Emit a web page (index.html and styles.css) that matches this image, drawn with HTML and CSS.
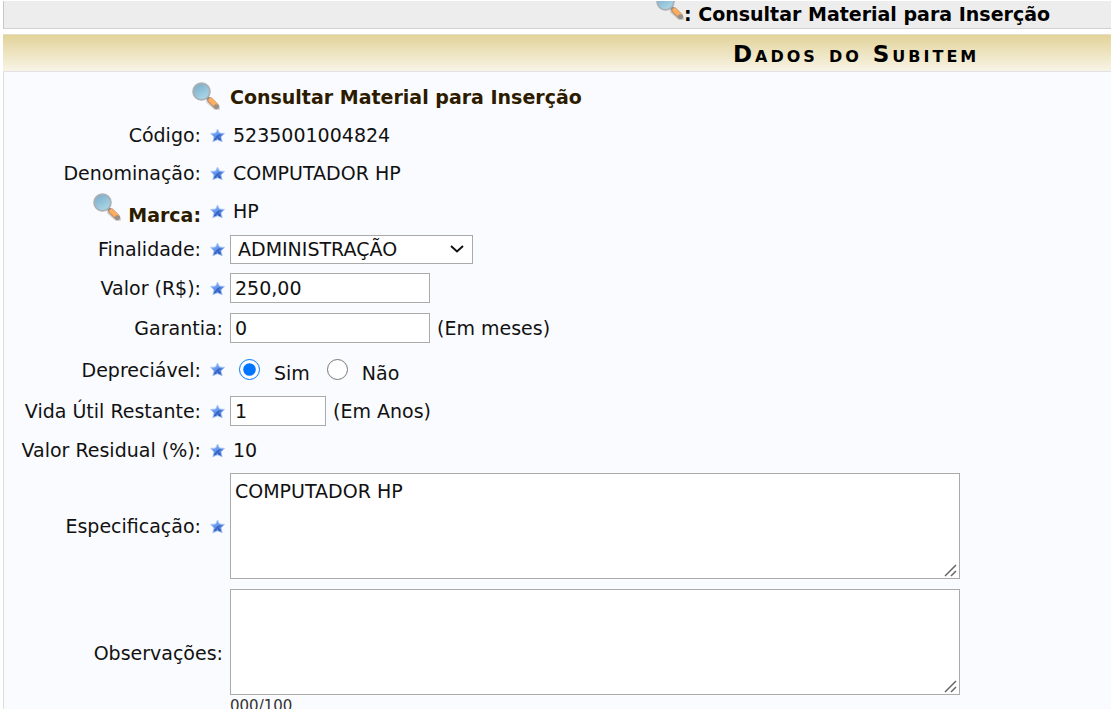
FILE: index.html
```
<!DOCTYPE html>
<html lang="pt-BR">
<head>
<meta charset="utf-8">
<title>Dados do Subitem</title>
<link rel="stylesheet" href="styles.css">
</head>
<body>
<svg class="defs" aria-hidden="true">
  <defs>
    <linearGradient id="glass" x1="0" y1="0" x2="0.6" y2="1"><stop offset="0" stop-color="#75a8c4"/><stop offset="1" stop-color="#aad7e9"/></linearGradient>
    <linearGradient id="blue" x1="0" y1="0" x2="0.5" y2="1"><stop offset="0" stop-color="#a6ccff"/><stop offset="0.45" stop-color="#6b9cf0"/><stop offset="1" stop-color="#3a6acb"/></linearGradient>
    <symbol id="lens" viewBox="0 0 28 28">
      <path d="M17 19l8 7" stroke="#777" stroke-opacity=".3" stroke-width="6" stroke-linecap="round"/>
      <path d="M14 14l4 4" stroke="#77787c" stroke-width="3.500"/>
      <path d="M18.500 18.500l5.500 5.500" stroke="#c09070" stroke-width="6" stroke-linecap="round"/>
      <path d="M18.500 18l5 5" stroke="#ffae60" stroke-width="4" stroke-linecap="round"/>
      <path d="M24 24.500l.8.300" stroke="#96918c" stroke-width="4.500" stroke-linecap="round"/>
      <circle cx="9.500" cy="9.500" r="8.400" fill="url(#glass)" stroke="#a9b1b6" stroke-width="1.800"/>
    </symbol>
    <symbol id="star" viewBox="0 0 15 15">
      <path d="M7.500 1l2 4 5 .4-3.500 3.600 1.200 4.800-4.700-2-4.700 2L4 9 .6 5.400l5-.4z" fill="url(#blue)" stroke="#a9c6f6" stroke-width=".8" stroke-linejoin="round"/>
      <path d="M7.500 8l3-1.500M7.500 8l2.500 4M7.500 8l-3 4" stroke="#2448aa" stroke-opacity=".7" stroke-width="1.200"/>
    </symbol>
  </defs>
</svg>
<header class="legend"><svg class="lens"><use href="#lens"/></svg><strong>: Consultar Material para Inserção</strong></header>
<form class="panel">
  <h1 class="title">Dados do Subitem</h1>
  <div class="fields">
    <div class="row">
      <a class="label link" href="#" aria-label="Consultar"><svg class="lens"><use href="#lens"/></svg></a>
      <a class="link" href="#">Consultar Material para Inserção</a>
    </div>
    <div class="row"><span class="label">Código: <svg class="star"><use href="#star"/></svg></span><span class="value">5235001004824</span></div>
    <div class="row"><span class="label">Denominação: <svg class="star"><use href="#star"/></svg></span><span class="value">COMPUTADOR HP</span></div>
    <div class="row"><span class="label"><a class="link brand" href="#"><svg class="lens"><use href="#lens"/></svg><span class="brand-name">Marca:</span></a><svg class="star"><use href="#star"/></svg></span><span class="value">HP</span></div>
    <div class="row"><label class="label" for="purpose">Finalidade: <svg class="star"><use href="#star"/></svg></label>
      <span class="select"><select id="purpose" class="control"><option>ADMINISTRAÇÃO</option></select><svg class="chevron" viewBox="0 0 16 10"><path d="M2 2l6 5.500L14 2" fill="none" stroke="#111" stroke-width="2"/></svg></span></div>
    <div class="row tall"><label class="label" for="price">Valor (R$): <svg class="star"><use href="#star"/></svg></label><input id="price" class="control medium" type="text" value="250,00"></div>
    <div class="row tall"><label class="label plain" for="warranty">Garantia:</label><span class="value-group"><input id="warranty" class="control medium" type="text" value="0"><span>(Em meses)</span></span></div>
    <div class="row choice"><span class="label">Depreciável: <svg class="star"><use href="#star"/></svg></span>
      <span class="radios"><input class="radio" type="radio" name="dep" id="yes" checked><label class="choice-label" for="yes">Sim</label><input class="radio" type="radio" name="dep" id="no"><label class="choice-label" for="no">Não</label></span></div>
    <div class="row tall"><label class="label" for="life">Vida Útil Restante: <svg class="star"><use href="#star"/></svg></label><span class="value-group"><input id="life" class="control short" type="text" value="1"><span>(Em Anos)</span></span></div>
    <div class="row"><span class="label">Valor Residual (%): <svg class="star"><use href="#star"/></svg></span><span class="value">10</span></div>
    <div class="row area"><label class="label" for="spec">Especificação: <svg class="star"><use href="#star"/></svg></label><textarea id="spec" class="control">COMPUTADOR HP</textarea></div>
    <div class="row notes"><label class="label plain" for="notes">Observações:</label><div><textarea id="notes" class="control"></textarea><div class="counter">000/100</div></div></div>
  </div>
</form>
</body>
</html>
```
FILE: styles.css
```
* { box-sizing: border-box; }
body {
  margin: 0;
  padding: 1px 0 0 3px;
  overflow: hidden;
  background: #fff;
  color: #111;
  font: 19px/22px Verdana, "DejaVu Sans", sans-serif;
}
.defs { position: absolute; width: 0; height: 0; }
.legend {
  display: flex;
  align-items: flex-end;
  height: 28px;
  padding: 0 0 3px 652px;
  overflow: hidden;
  background: #ededed;
  border-left: 1px solid #c8c8c8;
  border-bottom: 1px solid #d0d0d0;
  color: #000;
  white-space: nowrap;
}
.legend .lens { margin-bottom: 5px; }
.panel { margin-top: 5px; }
.title {
  margin: 0;
  padding: 8px 0 6px 730px;
  border-top: 1px solid #e5dfca;
  border-bottom: 1px solid #e2e2e6;
  background: linear-gradient(#e2d39a, #f8f4e6);
  color: #000;
  font-size: 23px;
  line-height: 22px;
  font-variant: small-caps;
  letter-spacing: 3px;
  white-space: nowrap;
}
.fields {
  padding-top: 6px;
  background: #fafbfe;
  border-left: 1px solid #dedede;
}
.row {
  display: grid;
  grid-template-columns: 221px 1fr;
  column-gap: 5px;
  align-items: center;
  min-height: 38px;
  white-space: nowrap;
}
.tall { min-height: 40px; }
.choice { min-height: 43px; }
.area { min-height: 114px; }
.notes { padding-top: 6px; }
.label { display: flex; justify-content: flex-end; align-items: center; gap: 9px; }
.plain { padding-right: 2px; }
.link { color: #2d1b00; font-weight: bold; text-decoration: none; }
.row > .label.link { padding: 0 5px 2px 0; }
.brand { display: flex; align-items: flex-start; gap: 7px; }
.brand-name { padding: 11px 0 3px; }
.lens { flex: none; width: 28px; height: 28px; }
.star { flex: none; width: 15px; height: 15px; }
.value { padding-left: 3px; }
.value-group { display: flex; align-items: center; gap: 7px; }
.control {
  margin: 0;
  padding: 0 4px;
  height: 30px;
  border: 1px solid #aaa;
  border-radius: 0;
  background: #fff;
  color: #111;
  font: inherit;
}
.medium { width: 200px; }
.short { width: 96px; }
.select { display: grid; width: 243px; align-items: center; }
.select > * { grid-area: 1 / 1; }
.select .control { appearance: none; width: 100%; height: 29px; padding-left: 7px; }
.chevron { justify-self: end; width: 16px; height: 10px; margin-right: 8px; pointer-events: none; }
.radios { display: flex; align-items: center; padding-left: 9px; }
.radio { width: 21px; height: 21px; margin: 0; accent-color: #0075ff; }
.choice-label { padding: 6px 17px 0 14px; }
textarea.control { width: 730px; height: 106px; padding: 6px 4px; display: block; resize: both; }
textarea::-webkit-resizer {
  background: url("data:image/svg+xml,%3Csvg xmlns='http://www.w3.org/2000/svg' viewBox='0 0 15 15'%3E%3Cpath d='M1 13L12 2M7 13l5-5' stroke='%23666' stroke-width='1.500'/%3E%3C/svg%3E") center / 100% no-repeat;
}
.counter { font-size: 15px; line-height: 22px; color: #333; }
```
